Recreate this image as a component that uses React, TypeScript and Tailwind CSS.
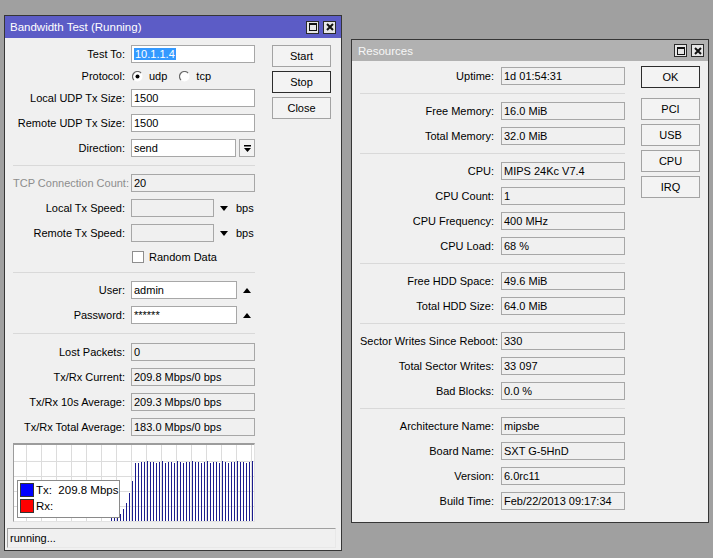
import React from "react";

const font = "font-[Liberation_Sans,Arial,sans-serif] text-[11px] leading-[18px] text-black";

const TitleButtons = () => (
  <div className="flex gap-[4px]">
    <div className="w-[13px] h-[13px] border border-[#2a2a2a] bg-[#e6e6e6] flex items-center justify-center">
      <div className="w-[8px] h-[8px] border border-[#111] border-t-2" />
    </div>
    <div className="w-[13px] h-[13px] border border-[#2a2a2a] bg-[#e6e6e6] flex items-center justify-center">
      <svg width="8" height="8" viewBox="0 0 8 8">
        <path d="M1 1L7 7M7 1L1 7" stroke="#111" strokeWidth="2" />
      </svg>
    </div>
  </div>
);

const Input = ({
  value,
  w = "w-[124px]",
  ro = false,
  children,
}: {
  value?: string;
  w?: string;
  ro?: boolean;
  children?: React.ReactNode;
}) => (
  <div
    className={`${w} h-[18px] border border-[#a7a7a7] pl-[2px] leading-[16px] whitespace-nowrap overflow-hidden ${
      ro ? "bg-[#f0f0f0]" : "bg-white"
    }`}
  >
    {children ?? value}
  </div>
);

const Row = ({
  label,
  labelW,
  gap,
  gray = false,
  children,
}: {
  label: string;
  labelW: string;
  gap: string;
  gray?: boolean;
  children: React.ReactNode;
}) => (
  <div className={`flex items-center h-[18px] ${gap}`}>
    <div className={`${labelW} text-right whitespace-nowrap ${gray ? "text-[#8d8d8d]" : ""}`}>{label}</div>
    {children}
  </div>
);

const Sep = ({ h = "h-[3px]" }: { h?: string }) => (
  <div className={`${h} flex flex-col justify-center`}>
    <div className="h-px bg-[#d9d9d9]" />
  </div>
);

const Button = ({ label, dark = false }: { label: string; dark?: boolean }) => (
  <div
    className={`w-[59px] h-[22px] flex items-center justify-center bg-[#f3f3f3] border ${
      dark ? "border-[#2c2c2c]" : "border-[#a3a3a3]"
    }`}
  >
    {label}
  </div>
);

const DownTri = () => (
  <svg width="8" height="5" viewBox="0 0 8 5">
    <polygon points="0,0 8,0 4,5" fill="#000" />
  </svg>
);

const UpTri = () => (
  <svg width="8" height="5" viewBox="0 0 8 5">
    <polygon points="0,5 8,5 4,0" fill="#000" />
  </svg>
);

const Radio = ({ on }: { on: boolean }) => (
  <svg width="11" height="11" viewBox="0 0 11 11">
    <circle cx="5.5" cy="5.5" r="5" fill="#fff" />
    <path d="M1.96 9.04A5 5 0 0 1 9.04 1.96" stroke="#6a6a6a" strokeWidth="1.2" fill="none" />
    {on && <circle cx="5.5" cy="5.5" r="2" fill="#000" />}
  </svg>
);

const ramp = [3, 3, 3, 7, 12, 18, 28, 40, 58];
const bars = Array.from({ length: 48 }, (_, i) => {
  const h = i < ramp.length ? ramp[i] : i % 5 === 2 ? 60 : i % 3 === 0 ? 58 : 59;
  return { x: 97 + i * 3, h };
});

const Graph = () => (
  <div className="relative h-[79px] bg-white border-t-2 border-l border-[#9c9c9c] border-r border-r-[#e2e2e2] border-b border-b-[#e2e2e2]">
    <svg width="240" height="76" className="block">
      {Array.from({ length: 16 }, (_, i) => (
        <line key={"v" + i} x1={12.5 + i * 15} y1="0" x2={12.5 + i * 15} y2="76" stroke="#dcdcdc" />
      ))}
      {[16, 31, 46, 61].map((y) => (
        <line key={"h" + y} x1="0" y1={y + 0.5} x2="240" y2={y + 0.5} stroke="#dcdcdc" />
      ))}
      {bars.map((b) => (
        <line key={b.x} x1={b.x + 0.5} y1={76 - b.h} x2={b.x + 0.5} y2="76" stroke="#1c1c8e" />
      ))}
    </svg>
    <div className="absolute left-[3px] top-[35px] w-[103px] h-[38px] bg-white border border-[#8a8a8a] flex flex-col gap-[2px] pl-[2px] pt-[2px]">
      <div className="flex items-center gap-[2px] h-[14px] leading-[14px] text-[11.5px] whitespace-nowrap">
        <div className="w-[14px] h-[14px] shrink-0 bg-[#0000ff] border border-[#333]" />
        <span>Tx:&nbsp; 209.8 Mbps</span>
      </div>
      <div className="flex items-center gap-[2px] h-[14px] leading-[14px] text-[11.5px] whitespace-nowrap">
        <div className="w-[14px] h-[14px] shrink-0 bg-[#ff0000] border border-[#333]" />
        <span>Rx:</span>
      </div>
    </div>
  </div>
);

const L = "w-[112px]";
const LG = "gap-[6px]";

const BandwidthTest = () => (
  <div className="absolute left-[4px] top-[15px] w-[338px] h-[536px] border border-[#363636] bg-[#f0f0f0] flex flex-col">
    <div className="h-[22px] bg-[#5c5cc6] flex items-center justify-between pl-[5px] pr-[5px] text-white text-[11.5px]">
      <span>Bandwidth Test (Running)</span>
      <TitleButtons />
    </div>
    <div className="flex pl-[8px] pt-[7px]">
      <div className="w-[242px] flex flex-col gap-[7px]">
        <Row label="Test To:" labelW={L} gap={LG}>
          <Input>
            <span className="bg-[#3399ff] text-white px-px">10.1.1.4</span>
          </Input>
        </Row>
        <div className={`flex items-center h-[12px] ${LG}`}>
          <div className={`${L} text-right`}>Protocol:</div>
          <div className="flex items-center pl-[1px]">
            <Radio on />
            <span className="ml-[6px]">udp</span>
            <span className="ml-[12px]"><Radio on={false} /></span>
            <span className="ml-[6px]">tcp</span>
          </div>
        </div>
        <Row label="Local UDP Tx Size:" labelW={L} gap={LG}>
          <Input value="1500" />
        </Row>
        <Row label="Remote UDP Tx Size:" labelW={L} gap={LG}>
          <Input value="1500" />
        </Row>
        <Row label="Direction:" labelW={L} gap={LG}>
          <div className="flex gap-[3px]">
            <Input value="send" w="w-[105px]" />
            <div className="w-[16px] h-[18px] border border-[#a7a7a7] bg-[#f3f3f3] flex items-center justify-center">
              <svg width="7" height="7" viewBox="0 0 7 7">
                <rect x="0" y="0" width="7" height="1.5" fill="#000" />
                <polygon points="0,3 7,3 3.5,7" fill="#000" />
              </svg>
            </div>
          </div>
        </Row>
        <Sep />
        <Row label="TCP Connection Count:" labelW={L} gap={LG} gray>
          <Input value="20" ro />
        </Row>
        <Row label="Local Tx Speed:" labelW={L} gap={LG}>
          <div className="flex items-center">
            <Input value="" w="w-[83px]" ro />
            <span className="ml-[6px]"><DownTri /></span>
            <span className="ml-[8px]">bps</span>
          </div>
        </Row>
        <Row label="Remote Tx Speed:" labelW={L} gap={LG}>
          <div className="flex items-center">
            <Input value="" w="w-[83px]" ro />
            <span className="ml-[6px]"><DownTri /></span>
            <span className="ml-[8px]">bps</span>
          </div>
        </Row>
        <div className={`flex items-center h-[15px] ${LG}`}>
          <div className={L} />
          <div className="flex items-center pl-[1px]">
            <div className="w-[12px] h-[12px] bg-white border border-[#8e8e8e]" />
            <span className="ml-[5px]">Random Data</span>
          </div>
        </div>
        <Sep />
        <Row label="User:" labelW={L} gap={LG}>
          <div className="flex items-center">
            <Input value="admin" w="w-[106px]" />
            <span className="ml-[6px]"><UpTri /></span>
          </div>
        </Row>
        <Row label="Password:" labelW={L} gap={LG}>
          <div className="flex items-center">
            <Input value="******" w="w-[106px]" />
            <span className="ml-[6px]"><UpTri /></span>
          </div>
        </Row>
        <Sep h="h-[5px]" />
        <Row label="Lost Packets:" labelW={L} gap={LG}>
          <Input value="0" ro />
        </Row>
        <Row label="Tx/Rx Current:" labelW={L} gap={LG}>
          <Input value="209.8 Mbps/0 bps" ro />
        </Row>
        <Row label="Tx/Rx 10s Average:" labelW={L} gap={LG}>
          <Input value="209.3 Mbps/0 bps" ro />
        </Row>
        <Row label="Tx/Rx Total Average:" labelW={L} gap={LG}>
          <Input value="183.0 Mbps/0 bps" ro />
        </Row>
        <Graph />
      </div>
      <div className="ml-[17px] flex flex-col gap-[4px]">
        <Button label="Start" />
        <Button label="Stop" dark />
        <Button label="Close" />
      </div>
    </div>
    <div className="mt-auto ml-[2px] mr-[5px] mb-[2px] h-[20px] border-t border-l border-[#a0a0a0] border-r border-r-[#e8e8e8] border-b border-b-[#e8e8e8] pl-[2px] flex items-center">
      running...
    </div>
  </div>
);

const RL = "w-[134px]";
const RG = "gap-[7px]";

const resGroups: [string, string][][] = [
  [["Uptime:", "1d 01:54:31"]],
  [
    ["Free Memory:", "16.0 MiB"],
    ["Total Memory:", "32.0 MiB"],
  ],
  [
    ["CPU:", "MIPS 24Kc V7.4"],
    ["CPU Count:", "1"],
    ["CPU Frequency:", "400 MHz"],
    ["CPU Load:", "68 %"],
  ],
  [
    ["Free HDD Space:", "49.6 MiB"],
    ["Total HDD Size:", "64.0 MiB"],
  ],
  [
    ["Sector Writes Since Reboot:", "330"],
    ["Total Sector Writes:", "33 097"],
    ["Bad Blocks:", "0.0 %"],
  ],
  [
    ["Architecture Name:", "mipsbe"],
    ["Board Name:", "SXT G-5HnD"],
    ["Version:", "6.0rc11"],
    ["Build Time:", "Feb/22/2013 09:17:34"],
  ],
];

const Resources = () => (
  <div className="absolute left-[351px] top-[39px] w-[358px] h-[484px] border border-[#363636] bg-[#f0f0f0] flex flex-col">
    <div className="h-[21px] bg-[#b1b1b1] flex items-center justify-between pl-[6px] pr-[4px] text-[#f7f7f7] text-[11.5px]">
      <span>Resources</span>
      <TitleButtons />
    </div>
    <div className="flex pl-[8px]">
      <div className="w-[265px] flex flex-col gap-[7px] pt-[6px]">
        {resGroups.map((g, gi) => (
          <React.Fragment key={gi}>
            {gi > 0 && <Sep />}
            {g.map(([l, v]) => (
              <Row key={l} label={l} labelW={RL} gap={RG}>
                <Input value={v} ro />
              </Row>
            ))}
          </React.Fragment>
        ))}
      </div>
      <div className="ml-[16px] pt-[5px] flex flex-col gap-[4px]">
        <Button label="OK" dark />
        <div className="mt-[6px]">
          <Button label="PCI" />
        </div>
        <Button label="USB" />
        <Button label="CPU" />
        <Button label="IRQ" />
      </div>
    </div>
  </div>
);

export default function App() {
  return (
    <div className={`relative w-[713px] h-[558px] bg-[#a0a0a0] overflow-hidden ${font}`}>
      <BandwidthTest />
      <Resources />
    </div>
  );
}
